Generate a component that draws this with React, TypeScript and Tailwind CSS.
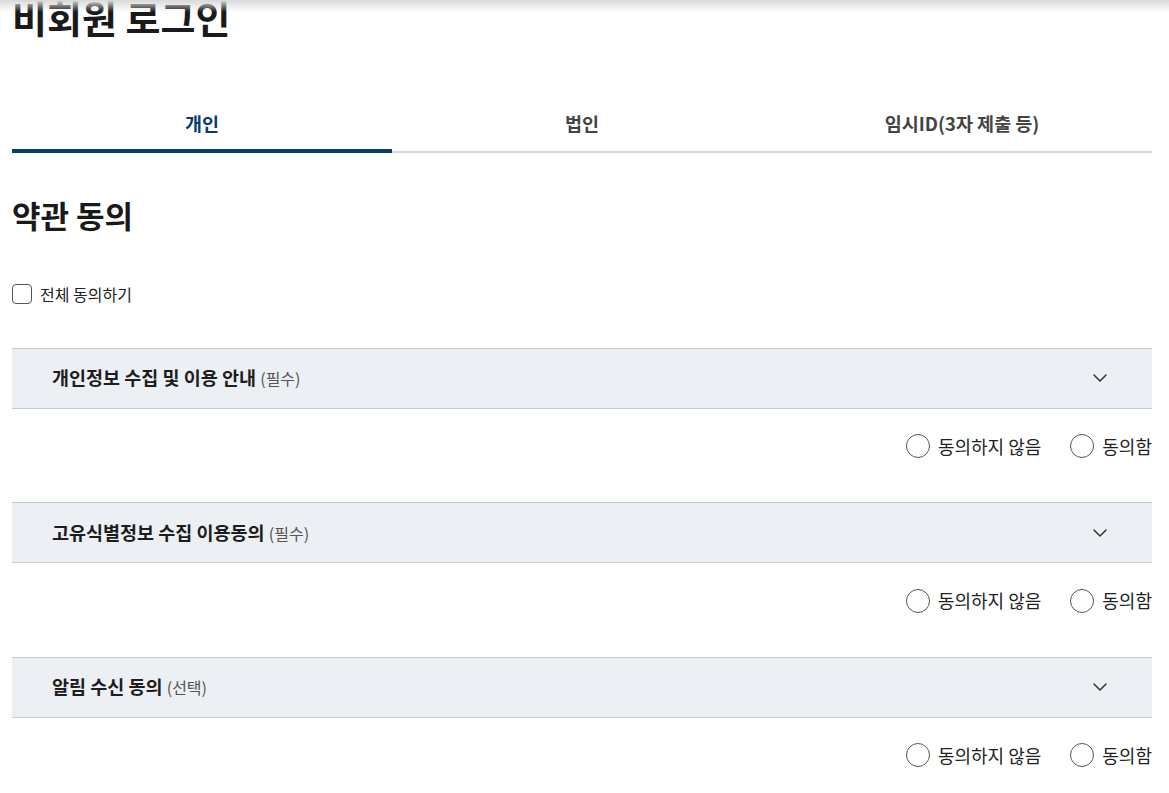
import { ChevronDown } from 'lucide-react'

const terms = [
  { title: '개인정보 수집 및 이용 안내', tag: '(필수)' },
  { title: '고유식별정보 수집 이용동의', tag: '(필수)' },
  { title: '알림 수신 동의', tag: '(선택)' },
]

const tabs = ['개인', '법인', '임시ID(3자 제출 등)']

function TermBlock({ title, tag }: { title: string; tag: string }) {
  return (
    <div>
      <div className="flex h-[61px] items-center justify-between border-y border-[#c9cbcf] bg-[#eceff3] pl-10 pr-10">
        <p className="text-[18.5px] font-bold text-[#1d1d1d]">
          {title} <span className="text-[16px] font-normal text-[#555]">{tag}</span>
        </p>
        <ChevronDown className="h-6 w-6 text-[#333]" strokeWidth={1.5} />
      </div>
      <div className="flex h-[93.5px] items-start justify-end gap-[29px] pt-[24px]">
        <label className="flex items-center gap-2">
          <span className="h-6 w-6 rounded-full border border-[#555]" />
          <span className="text-[18px] text-[#222]">동의하지 않음</span>
        </label>
        <label className="flex items-center gap-2">
          <span className="h-6 w-6 rounded-full border border-[#555]" />
          <span className="text-[18px] text-[#222]">동의함</span>
        </label>
      </div>
    </div>
  )
}

export default function App() {
  return (
    <div className="relative min-h-screen overflow-hidden bg-white font-['Noto_Sans_CJK_KR','Noto_Sans',sans-serif]">
      <div className="pointer-events-none absolute inset-x-0 top-0 h-3 bg-gradient-to-b from-[#d9d9d9] to-white/0" />
      <div className="px-3">
        <h1 className="-mt-[10px] text-[38px] font-bold leading-[1.4] text-[#1a1a1a]">비회원 로그인</h1>

        <div className="mt-[50px] grid w-[1140px] grid-cols-3 border-b-2 border-[#d6d6d6]">
          {tabs.map((tab, i) => (
            <div
              key={tab}
              className={
                i === 0
                  ? '-mb-[2px] flex h-[60px] items-start justify-center border-b-4 border-[#0b3a6e] pt-[17px] text-[18.5px] font-bold text-[#0b3a6e]'
                  : 'flex h-[58px] items-start justify-center pt-[17px] text-[18.5px] font-bold text-[#444]'
              }
            >
              {tab}
            </div>
          ))}
        </div>

        <h2 className="mt-[39px] text-[31px] font-bold text-[#1a1a1a]">약관 동의</h2>

        <label className="mt-[43px] flex items-center gap-2">
          <span className="h-5 w-5 rounded-[4px] border border-[#555]" />
          <span className="text-[16px] text-[#222]">전체 동의하기</span>
        </label>

        <div className="mt-[42px] w-[1140px]">
          {terms.map((t) => (
            <TermBlock key={t.title} title={t.title} tag={t.tag} />
          ))}
        </div>
      </div>
    </div>
  )
}
